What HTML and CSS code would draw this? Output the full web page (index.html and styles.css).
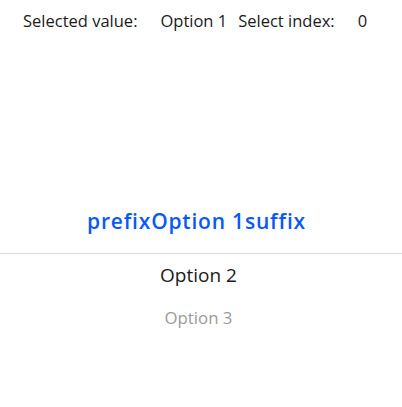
FILE: index.html
```html
<!DOCTYPE html>
<html>
<head>
<meta charset="utf-8">
<link rel="stylesheet" href="styles.css">
</head>
<body>
<div class="page">
  <div class="header">
    <span class="label">Selected value:</span>
    <span class="value">Option 1</span>
    <span class="label">Select index:</span>
    <span class="value">0</span>
  </div>
  <div class="picker">
    <div class="row selected">prefixOption 1suffix</div>
    <div class="row near">Option 2</div>
    <div class="row far">Option 3</div>
  </div>
</div>
</body>
</html>
```

FILE: styles.css
```css
html, body {
  margin: 0;
  padding: 0;
  background: #ffffff;
}
.page {
  width: 402px;
  height: 407px;
  font-family: "Open Sans", "Noto Sans", sans-serif;
  color: #1a1a1a;
}
.header {
  height: 40px;
  display: flex;
  align-items: center;
  padding-left: 23px;
  font-size: 16.5px;
}
.label {
  margin-right: 23px;
}
.value {
  margin-right: 11px;
}
.picker {
  margin-top: 148px;
  display: flex;
  flex-direction: column;
}
.row {
  display: flex;
  align-items: center;
  justify-content: center;
  padding-right: 5px;
}
.selected {
  height: 66px;
  font-size: 21px;
  font-weight: 600;
  letter-spacing: 0.8px;
  color: #0a59f7;
  border-bottom: 1px solid #dcdcdc;
  box-sizing: border-box;
  padding-right: 9px;
}
.near {
  height: 42px;
  font-size: 19px;
  color: #1a1a1a;
}
.far {
  height: 43px;
  font-size: 16.8px;
  color: #9a9a9a;
}
```
